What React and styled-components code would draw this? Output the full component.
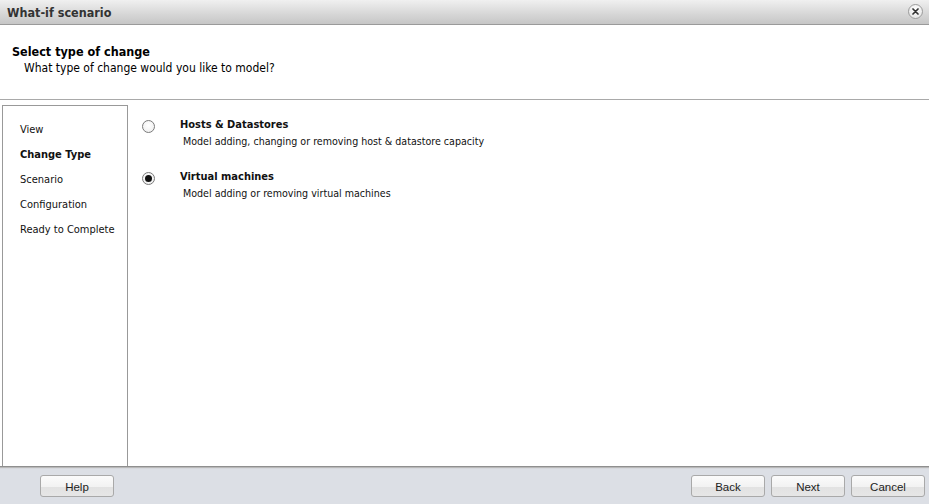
import React from "react";
import styled, { createGlobalStyle } from "styled-components";

const Global = createGlobalStyle`
  html, body { margin: 0; padding: 0; background: #fff; }
  body { font-family: "DejaVu Sans Condensed", "DejaVu Sans", sans-serif; color: #000; }
  #root { width: 929px; height: 504px; }
`;

const Window = styled.div`
  width: 929px;
  height: 504px;
  display: flex;
  flex-direction: column;
  background: #fff;
  overflow: hidden;
`;

const TitleBar = styled.div`
  height: 25px;
  flex: 0 0 25px;
  box-sizing: border-box;
  display: flex;
  align-items: center;
  justify-content: space-between;
  padding: 0 6px 0 7px;
  background: linear-gradient(#f0f0f0, #d6d6d6 60%, #c6c6c6);
  border-bottom: 1px solid #9a9a9a;
`;

const Title = styled.div`
  font-weight: bold;
  font-size: 12.5px;
  color: #333;
  padding-top: 1px;
`;

const CloseBtn = styled.div`
  width: 15px;
  height: 15px;
  border-radius: 50%;
  box-sizing: border-box;
  border: 1px solid #9c9c9c;
  background: radial-gradient(circle at 50% 35%, #ffffff, #e0e0e0);
  display: flex;
  align-items: center;
  justify-content: center;
  margin-top: -2px;
`;

const Header = styled.div`
  flex: 0 0 auto;
  height: 75px;
  box-sizing: border-box;
  padding: 19px 12px 0;
  border-bottom: 1px solid #a9a9a9;
`;

const HeaderTitle = styled.div`
  font-weight: bold;
  font-size: 12.5px;
  line-height: 16px;
`;

const HeaderSub = styled.div`
  font-size: 12px;
  line-height: 16px;
  padding-left: 12px;
`;

const Body = styled.div`
  flex: 1;
  display: flex;
  padding: 5px 0 0 2px;
  border-bottom: 1px solid #8f8f8f;
  box-shadow: 0 1px 1px #b8b8b8;
  position: relative;
`;

const Nav = styled.div`
  width: 126px;
  box-sizing: border-box;
  border: 1px solid #999;
  border-bottom: none;
  padding: 11px 0 0 17px;
  display: flex;
  flex-direction: column;
`;

const NavItem = styled.div`
  font-size: 11px;
  line-height: 25px;
  font-weight: ${(p) => (p.$active ? "bold" : "normal")};
  color: #111;
`;

const Content = styled.div`
  flex: 1;
  padding: 12px 0 0 14px;
  display: flex;
  flex-direction: column;
  gap: 20px;
`;

const Option = styled.div`
  display: flex;
  align-items: flex-start;
`;

const Radio = styled.div`
  width: 13px;
  height: 13px;
  box-sizing: border-box;
  border-radius: 50%;
  border: 1px solid #7a7a7a;
  background: radial-gradient(circle at 50% 40%, #fff, #ececec);
  margin-top: 3px;
  margin-right: 25px;
  display: flex;
  align-items: center;
  justify-content: center;
  &::after {
    content: "";
    display: ${(p) => (p.$checked ? "block" : "none")};
    width: 7px;
    height: 7px;
    border-radius: 50%;
    background: #111;
  }
`;

const OptText = styled.div`
  display: flex;
  flex-direction: column;
`;

const OptTitle = styled.div`
  font-size: 11px;
  font-weight: bold;
  line-height: 16px;
  color: #111;
`;

const OptDesc = styled.div`
  font-size: 10.6px;
  line-height: 16px;
  padding-left: 3px;
  color: #111;
`;

const Footer = styled.div`
  flex: 0 0 37px;
  height: 37px;
  box-sizing: border-box;
  background: #dcdfe5;
  display: flex;
  align-items: flex-start;
  padding: 8px 4px 0 40px;
`;

const Button = styled.div`
  width: 74px;
  height: 22px;
  box-sizing: border-box;
  border: 1px solid #a9a9a9;
  border-radius: 3px;
  background: linear-gradient(#fbfbfb, #f2f2f2 55%, #e2e2e2 56%, #e6e6e6);
  font-family: "Liberation Sans", Arial, sans-serif;
  font-size: 11.5px;
  color: #222;
  display: flex;
  align-items: center;
  justify-content: center;
  padding-top: 2px;
`;

const Spacer = styled.div`
  flex: 1;
`;

const ButtonGroup = styled.div`
  display: flex;
  gap: 6px;
`;

export default function App() {
  return (
    <>
      <Global />
      <Window>
        <TitleBar>
          <Title>What-if scenario</Title>
          <CloseBtn>
            <svg width="7" height="7" viewBox="0 0 7 7">
              <path d="M1 1L6 6M6 1L1 6" stroke="#333" strokeWidth="1.7" strokeLinecap="round" />
            </svg>
          </CloseBtn>
        </TitleBar>
        <Header>
          <HeaderTitle>Select type of change</HeaderTitle>
          <HeaderSub>What type of change would you like to model?</HeaderSub>
        </Header>
        <Body>
          <Nav>
            <NavItem>View</NavItem>
            <NavItem $active>Change Type</NavItem>
            <NavItem>Scenario</NavItem>
            <NavItem>Configuration</NavItem>
            <NavItem>Ready to Complete</NavItem>
          </Nav>
          <Content>
            <Option>
              <Radio />
              <OptText>
                <OptTitle>Hosts &amp; Datastores</OptTitle>
                <OptDesc>Model adding, changing or removing host &amp; datastore capacity</OptDesc>
              </OptText>
            </Option>
            <Option>
              <Radio $checked />
              <OptText>
                <OptTitle>Virtual machines</OptTitle>
                <OptDesc>Model adding or removing virtual machines</OptDesc>
              </OptText>
            </Option>
          </Content>
        </Body>
        <Footer>
          <Button>Help</Button>
          <Spacer />
          <ButtonGroup>
            <Button>Back</Button>
            <Button>Next</Button>
            <Button>Cancel</Button>
          </ButtonGroup>
        </Footer>
      </Window>
    </>
  );
}
